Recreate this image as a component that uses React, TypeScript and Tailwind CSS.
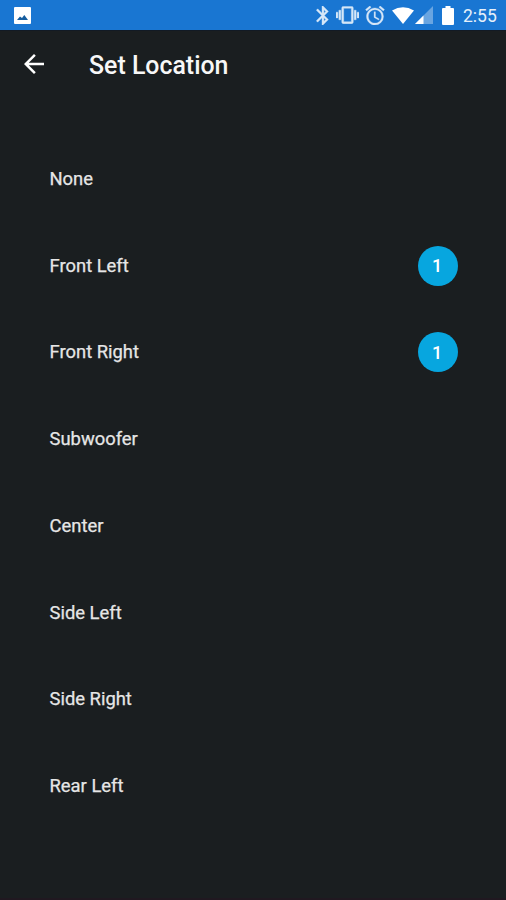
const locations: { name: string; count?: number }[] = [
  { name: "None" },
  { name: "Front Left", count: 1 },
  { name: "Front Right", count: 1 },
  { name: "Subwoofer" },
  { name: "Center" },
  { name: "Side Left" },
  { name: "Side Right" },
  { name: "Rear Left" },
];

function StatusBar() {
  return (
    <div className="flex h-[31px] shrink-0 items-center border-b border-[#121a24] bg-[#1976d2] pl-[14px] pr-[9px] text-white">
      <svg className="h-[17px] w-[17px]" viewBox="0 0 17 17">
        <rect width="17" height="17" rx="1" fill="currentColor" />
        <path d="M3 13l3-3.500 2 1.500 2.300-3L14 13z" fill="#155d9f" />
      </svg>
      <svg className="ml-auto h-[19px] w-[13px] text-[#d6e7f8]" viewBox="5 2 13 20" fill="currentColor" stroke="currentColor" strokeWidth="0.4">
        <path d="M17.710 7.710L12 2h-1v7.590L6.410 5 5 6.410 10.590 12 5 17.590 6.410 19 11 14.410V22h1l5.710-5.710-4.300-4.290 4.300-4.290zM13 5.830l1.880 1.880L13 9.590V5.830zm1.880 10.460L13 18.170v-3.760l1.880 1.880z" />
      </svg>
      <svg className="ml-[7px] h-[18px] w-[23px] text-[#d6e7f8]" viewBox="0 3 24 18" fill="currentColor" stroke="currentColor" strokeWidth="0.4">
        <path d="M0 15h2V9H0v6zm3 2h2V7H3v10zm19-8v6h2V9h-2zm-3 8h2V7h-2v10zM16.500 3h-9C6.670 3 6 3.670 6 4.500v15c0 .83.670 1.500 1.500 1.500h9c.83 0 1.500-.67 1.500-1.500v-15c0-.83-.67-1.500-1.500-1.500zM16 19H8V5h8v14z" />
      </svg>
      <svg className="ml-[6px] h-[19px] w-[20px] text-[#d6e7f8]" viewBox="2 2 20 20" fill="currentColor" stroke="currentColor" strokeWidth="0.3">
        <path d="M22 5.720l-4.600-3.860-1.290 1.530 4.600 3.860L22 5.720zM7.880 3.390L6.600 1.860 2 5.710l1.290 1.530 4.590-3.850zM12.500 8H11v6l4.750 2.850.75-1.230-4-2.370V8zM12 4c-4.970 0-9 4.030-9 9s4.020 9 9 9a9 9 0 0 0 0-18zm0 16c-3.870 0-7-3.130-7-7s3.130-7 7-7 7 3.130 7 7-3.130 7-7 7z" />
      </svg>
      <svg className="ml-[7px] h-[17px] w-[22px]" viewBox="0 0 22 17" fill="currentColor">
        <path d="M0 3.600Q11-3 22 3.600L11 17z" />
      </svg>
      <svg className="ml-[1px] h-[18px] w-[18px]" viewBox="0 0 18 18" fill="currentColor">
        <path d="M0 18L18 0v18z" opacity=".35" />
        <path d="M0 18L8.500 9.500V18z" />
      </svg>
      <svg className="ml-[9px] h-[19px] w-[12px]" viewBox="0 0 12 19" fill="currentColor">
        <path d="M3.500 0h5v2H11q1 0 1 1v15q0 1-1 1H1q-1 0-1-1V3q0-1 1-1h2.500z" />
      </svg>
      <span className="ml-[9px] w-[34px] whitespace-nowrap pt-px text-[17.500px] leading-5 text-[#e5f0fa]">2:55</span>
    </div>
  );
}

export default function App() {
  return (
    <div className="flex h-[900px] w-[506px] flex-col overflow-hidden border-b-2 border-[#201820] bg-[#1a1e20] font-['Roboto',sans-serif]">
      <StatusBar />
      <header className="flex h-[71px] shrink-0 items-center pl-[24px]">
        <button aria-label="Back" className="mb-[5px] text-white">
          <svg className="h-[20px] w-[20px]" viewBox="4 4 16 16" fill="currentColor">
            <path d="M20 11H7.830l5.590-5.590L12 4l-8 8 8 8 1.410-1.410L7.830 13H20v-2z" />
          </svg>
        </button>
        <h1 className="mb-px ml-[45px] text-[24.900px] font-medium leading-8 text-[#f7f7f7]">Set Location</h1>
      </header>
      <ul className="mt-[33.600px]">
        {locations.map(({ name, count }) => (
          <li key={name} className="flex h-[86.750px] items-center justify-between pl-[49.500px] pr-[48px]">
            <span className="text-[18.400px] leading-6 text-[#e6e6e6] [-webkit-text-stroke:0.25px_#e6e6e6]">{name}</span>
            {count !== undefined && (
              <span className="flex h-10 w-10 items-center justify-center rounded-full bg-[#07a6df] pr-0.5 text-[18px] font-medium text-white">
                {count}
              </span>
            )}
          </li>
        ))}
      </ul>
    </div>
  );
}
